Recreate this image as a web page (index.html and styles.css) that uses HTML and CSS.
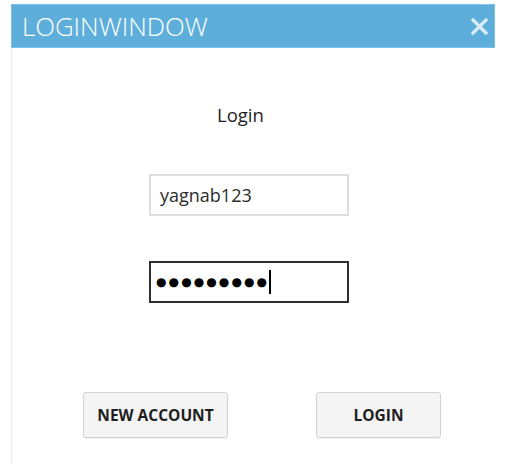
FILE: index.html
```html
<!DOCTYPE html>
<html>
<head>
<meta charset="utf-8">
<link rel="stylesheet" href="styles.css">
</head>
<body>
<div class="window">
  <div class="titlebar">
    <span class="title">LOGINWINDOW</span>
    <svg class="close" width="17" height="17" viewBox="0 0 17 17"><path d="M2 2 L15 15 M15 2 L2 15" stroke="#d9edf8" stroke-width="3.2" stroke-linecap="square"/></svg>
  </div>
  <div class="content">
    <div class="label">Login</div>
    <div class="field user">yagnab123</div>
    <div class="field pass"><span class="dots">●●●●●●●●●</span><span class="caret"></span></div>
    <div class="buttons">
      <div class="btn new">NEW ACCOUNT</div>
      <div class="btn login">LOGIN</div>
    </div>
  </div>
</div>
</body>
</html>
```
FILE: styles.css
```css
html, body {
  margin: 0;
  padding: 0;
  background: #ffffff;
}
body {
  font-family: "Open Sans", "Noto Sans", sans-serif;
  width: 506px;
  height: 464px;
  overflow: hidden;
}
.window {
  margin: 4px 0 0 11px;
  width: 484px;
}
.titlebar {
  height: 44px;
  background: #5eaedb;
  display: flex;
  align-items: center;
  justify-content: space-between;
  padding: 0 6px 0 10px;
  box-sizing: border-box;
  border: 1px solid #7cc0e6;
}
.title {
  color: #ffffff;
  font-size: 25.8px;
  font-weight: 300;
  line-height: 30px;
}
.close {
  display: block;
}
.content {
  height: 416px;
  border-left: 1px solid #e2ebf3;
  display: flex;
  flex-direction: column;
  align-items: flex-start;
}
.label {
  margin: 55px 0 0 205px;
  font-size: 18.5px;
  color: #1e1e1e;
  line-height: 24px;
}
.field {
  box-sizing: border-box;
  width: 200px;
  height: 42px;
  margin-left: 137px;
  display: flex;
  align-items: center;
  padding-left: 9px;
  font-size: 18px;
  color: #2b2b2b;
}
.user {
  margin-top: 47px;
  border: 2px solid #dedede;
}
.pass {
  margin-top: 45px;
  border: 2px solid #2e2e2e;
  padding-left: 5px;
}
.dots {
  font-family: "DejaVu Sans", sans-serif;
  font-size: 12px;
  letter-spacing: 2.1px;
  color: #000;
}
.caret {
  width: 2px;
  height: 24px;
  background: #000;
  margin-left: 0;
}
.buttons {
  margin: 89px 0 0 71px;
  display: flex;
  gap: 88px;
}
.btn {
  box-sizing: border-box;
  height: 46px;
  background: #f4f4f4;
  border: 1px solid #d2d2d2;
  border-radius: 3px;
  display: flex;
  align-items: center;
  justify-content: center;
  font-size: 15.5px;
  font-weight: 700;
  color: #1e1e1e;
  box-shadow: 0 1px 1px rgba(0,0,0,0.06);
}
.new { width: 145px; }
.login { width: 125px; }
```
